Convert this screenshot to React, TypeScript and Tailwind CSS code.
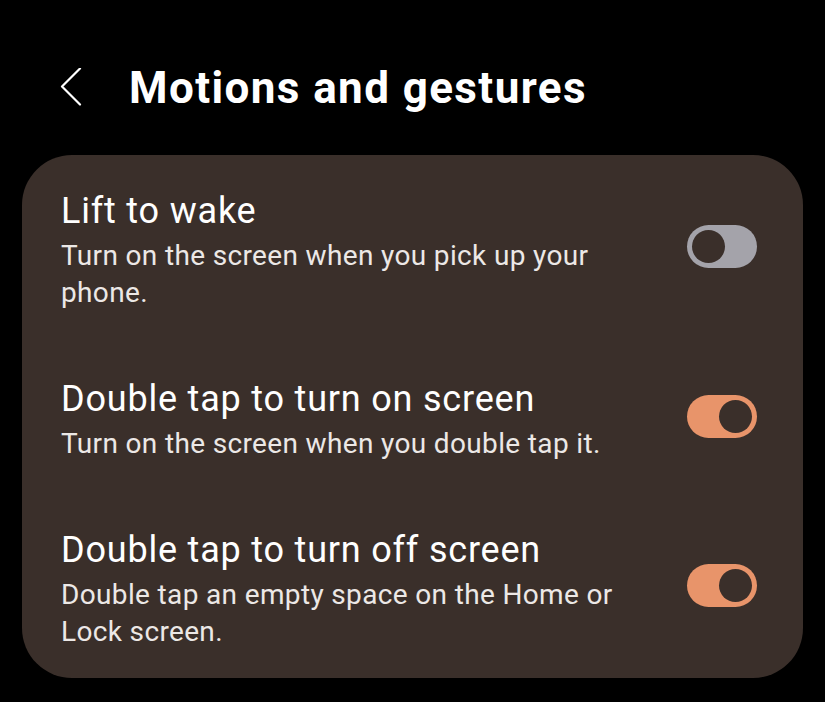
import { useState } from 'react'

type Item = {
  title: string
  desc: string
  on: boolean
}

const initial: Item[] = [
  { title: 'Lift to wake', desc: 'Turn on the screen when you pick up your phone.', on: false },
  { title: 'Double tap to turn on screen', desc: 'Turn on the screen when you double tap it.', on: true },
  { title: 'Double tap to turn off screen', desc: 'Double tap an empty space on the Home or Lock screen.', on: true },
]

function Toggle({ on, onClick }: { on: boolean; onClick: () => void }) {
  return (
    <button
      onClick={onClick}
      className={`mb-[8px] flex h-[43px] w-[70px] shrink-0 items-center rounded-full px-[5px] ${
        on ? 'justify-end bg-[#e8946a]' : 'justify-start bg-[#a4a3aa]'
      }`}
    >
      <span className="block h-[33px] w-[33px] rounded-full bg-[#3a2f2a]" />
    </button>
  )
}

export default function App() {
  const [items, setItems] = useState(initial)

  const toggle = (i: number) => {
    setItems(items.map((it, idx) => (idx === i ? { ...it, on: !it.on } : it)))
  }

  return (
    <div className="min-h-[702px] bg-black pt-[58px] font-['Roboto',sans-serif] text-white">
      {/* Header */}
      <div className="flex h-[60px] items-center">
        <svg width="24" height="40" viewBox="0 0 24 40" className="ml-[60px]" fill="none">
          <path d="M20 0.5 L2 18.5 L20 36.5" stroke="white" strokeWidth="2.2" strokeLinecap="round" strokeLinejoin="round" />
        </svg>
        <h1 className="ml-[45px] text-[44px] font-bold leading-[52px] tracking-[1.4px]">Motions and gestures</h1>
      </div>

      {/* Card */}
      <div className="mx-[22px] mt-[37px] rounded-[50px] bg-[#3a2f2a] pb-[28px] pl-[39px] pr-[46px] pt-[35px]">
        {items.map((it, i) => (
          <div key={i} className={`flex items-center justify-between ${i > 0 ? 'mt-[67px]' : ''}`}>
            <div className="max-w-[600px]">
              <div className="text-[36px] leading-[42px] tracking-[0.8px] text-white">{it.title}</div>
              <div className="mt-[5px] text-[28px] leading-[37px] tracking-[0.35px] text-[#ece8e6]">{it.desc}</div>
            </div>
            <Toggle on={it.on} onClick={() => toggle(i)} />
          </div>
        ))}
      </div>
    </div>
  )
}
